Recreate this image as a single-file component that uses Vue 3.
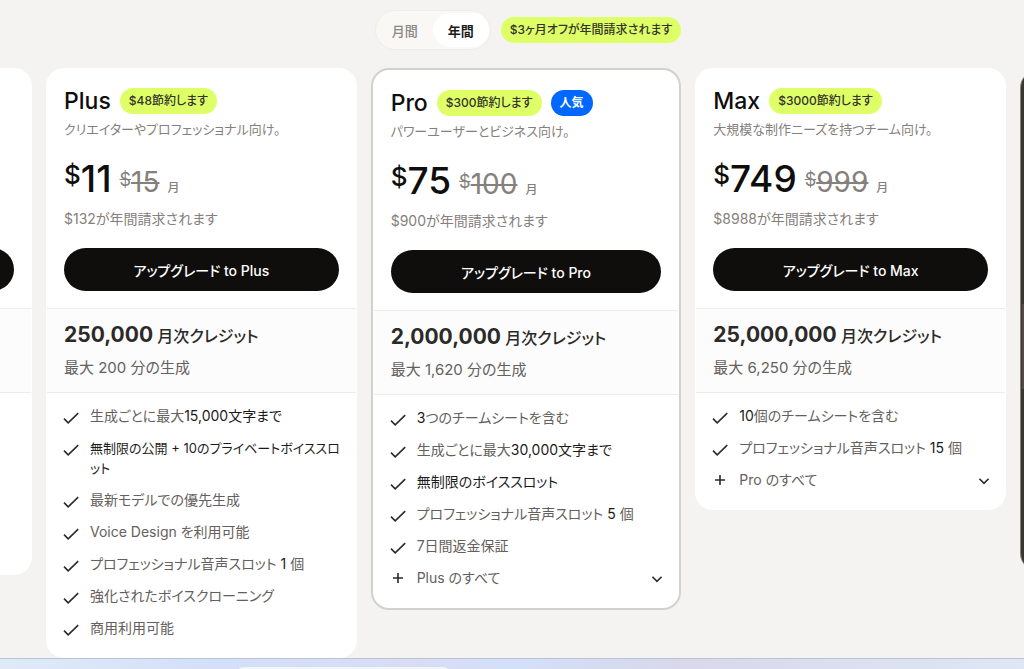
<script setup>
import { ref } from 'vue'

const period = ref('year')

const plans = [
  {
    name: 'Plus',
    save: '$48節約します',
    desc: 'クリエイターやプロフェッショナル向け。',
    price: '11',
    old: '15',
    billed: '$132が年間請求されます',
    credits: '250,000',
    minutes: '最大 200 分の生成',
    features: [
      [{ t: '生成ごとに最大' }, { t: '15,000文字まで', s: true }],
      [{ t: '無制限の公開 + 10のプライベートボイススロット', s: true, compact: true }],
      [{ t: '最新モデルでの優先生成' }],
      [{ t: 'Voice Design を利用可能' }],
      [{ t: 'プロフェッショナル音声スロット ' }, { t: '1', s: true }, { t: ' 個' }],
      [{ t: '強化されたボイスクローニング' }],
      [{ t: '商用利用可能' }],
    ],
  },
  {
    name: 'Pro',
    save: '$300節約します',
    popular: '人気',
    desc: 'パワーユーザーとビジネス向け。',
    price: '75',
    old: '100',
    billed: '$900が年間請求されます',
    credits: '2,000,000',
    minutes: '最大 1,620 分の生成',
    features: [
      [{ t: '3', s: true }, { t: 'つのチームシートを含む' }],
      [{ t: '生成ごとに最大' }, { t: '30,000文字まで', s: true }],
      [{ t: '無制限のボイススロット', s: true }],
      [{ t: 'プロフェッショナル音声スロット ' }, { t: '5', s: true }, { t: ' 個' }],
      [{ t: '7日間返金保証' }],
    ],
    includes: 'Plus のすべて',
  },
  {
    name: 'Max',
    save: '$3000節約します',
    desc: '大規模な制作ニーズを持つチーム向け。',
    price: '749',
    old: '999',
    billed: '$8988が年間請求されます',
    credits: '25,000,000',
    minutes: '最大 6,250 分の生成',
    features: [
      [{ t: '10', s: true }, { t: '個のチームシートを含む' }],
      [{ t: 'プロフェッショナル音声スロット ' }, { t: '15', s: true }, { t: ' 個' }],
    ],
    includes: 'Pro のすべて',
  },
]
</script>

<template>
  <div class="page">
    <div class="topbar">
      <div class="toggle">
        <button type="button" :class="{ active: period === 'month' }" :aria-pressed="period === 'month'" @click="period = 'month'">月間</button>
        <button type="button" :class="{ active: period === 'year' }" :aria-pressed="period === 'year'" @click="period = 'year'">年間</button>
      </div>
      <span class="pill">$3ヶ月オフが年間請求されます</span>
    </div>

    <main class="plans">
      <section class="card side">
        <div class="head"><button type="button" class="cta"></button></div>
        <div class="credits"></div>
        <div class="rest"></div>
      </section>

      <section v-for="p in plans" :key="p.name" class="card" :class="{ featured: p.popular }">
        <div class="head">
          <div class="title">
            <h2>{{ p.name }}</h2>
            <span class="pill">{{ p.save }}</span>
            <span v-if="p.popular" class="pill popular">{{ p.popular }}</span>
          </div>
          <p class="desc">{{ p.desc }}</p>
          <div class="price">
            <span class="now"><span class="cur">$</span>{{ p.price }}</span>
            <s class="was"><span class="cur">$</span>{{ p.old }}</s>
            <span class="per">月</span>
          </div>
          <p class="billed">{{ p.billed }}</p>
          <button type="button" class="cta">アップグレード to {{ p.name }}</button>
        </div>
        <div class="credits">
          <p class="amount"><b>{{ p.credits }}</b> 月次クレジット</p>
          <p class="minutes">{{ p.minutes }}</p>
        </div>
        <ul class="features">
          <li v-for="(f, i) in p.features" :key="i">
            <svg class="icon" viewBox="0 0 16 16" aria-hidden="true"><path d="M1 8.6 L5.2 12.8 L15.2 3.2" /></svg>
            <span class="label"><span v-for="(seg, j) in f" :key="j" :class="{ strong: seg.s, compact: seg.compact }">{{ seg.t }}</span></span>
          </li>
          <li v-if="p.includes">
            <button type="button" class="more">
              <svg class="icon plus" viewBox="0 0 16 16" aria-hidden="true"><path d="M8 3 V13 M3 8 H13" /></svg>
              <span class="label">{{ p.includes }}</span>
              <svg class="chevron" viewBox="0 0 12 12" aria-hidden="true"><path d="M1.4 3.8 L6 8.4 L10.6 3.8" /></svg>
            </button>
          </li>
        </ul>
      </section>

      <section class="card side dark">
        <div class="head"></div>
        <div class="credits"></div>
        <div class="rest"></div>
      </section>
    </main>

    <footer class="dock"><div class="tab"></div></footer>
  </div>
</template>

<style>
body {
  margin: 0;
  background: #f4f3f1;
}
</style>

<style scoped>
.page {
  --col: calc((100vw - 92px) / 3);
  box-sizing: border-box;
  min-height: 100vh;
  display: flex;
  flex-direction: column;
  overflow: hidden;
  background: #f4f3f1;
  color: #0f0e0d;
  font-family: Inter, "Noto Sans CJK JP", sans-serif;
  font-feature-settings: "palt";
  font-size: 14px;
}
h2, p, ul {
  margin: 0;
  padding: 0;
}
button {
  font: inherit;
  font-feature-settings: inherit;
  color: inherit;
  border: 0;
  padding: 0;
  background: none;
  cursor: pointer;
}
.topbar {
  display: flex;
  justify-content: center;
  align-items: center;
  gap: 10px;
  padding: 10px 0 18px;
  margin-left: 32px;
}
.toggle {
  box-sizing: border-box;
  display: flex;
  height: 40px;
  padding: 2px 1px;
  border: 1px solid #eeedea;
  border-radius: 20px;
  background: #f9f8f5;
}
.toggle button {
  width: 56px;
  border-radius: 17px;
  font-size: 13px;
  font-weight: 500;
  color: #8b8783;
}
.toggle .active {
  background: #fff;
  color: #1d1b1a;
  font-weight: 600;
}
.pill {
  height: 26px;
  line-height: 26px;
  padding: 0 9px;
  border-radius: 13px;
  background: #deff66;
  color: #35332c;
  font-size: 12px;
  font-weight: 500;
  white-space: nowrap;
}
.popular {
  background: #0067ff;
  color: #fff;
  font-weight: 600;
}
.plans {
  display: grid;
  grid-auto-flow: column;
  grid-auto-columns: var(--col);
  gap: 14px;
  align-items: start;
  margin-left: calc(32px - var(--col));
}
.card {
  box-sizing: border-box;
  min-width: 0;
  padding: 0 1px;
  border-radius: 18px;
  background: #fff;
}
.featured {
  border: 2px solid #d3d1cf;
}
.head {
  box-sizing: border-box;
  min-height: 240px;
  padding: 20px 17px 17px;
  display: flex;
  flex-direction: column;
}
.title {
  display: flex;
  align-items: center;
  gap: 9px;
}
h2 {
  font-size: 23px;
  line-height: 26px;
  font-weight: 500;
}
.desc {
  margin-top: 4px;
  font-size: 13px;
  line-height: 22px;
  color: #85807c;
  white-space: nowrap;
}
.price {
  display: flex;
  align-items: baseline;
  gap: 8px;
  height: 44px;
  margin-top: 17px;
  line-height: 44px;
}
.now {
  font-size: 37px;
  font-weight: 500;
}
.now .cur {
  font-size: 26px;
  vertical-align: 8px;
  line-height: 1;
}
.was {
  font-size: 28px;
  color: #85807c;
}
.was .cur {
  display: inline-block;
  font-size: 18px;
  vertical-align: 6px;
  line-height: 1;
  text-decoration: line-through;
}
.per {
  font-size: 12px;
  font-weight: 500;
  color: #85807c;
}
.billed {
  margin-top: 7px;
  line-height: 22px;
  color: #85807c;
}
.cta {
  width: 100%;
  height: 43px;
  margin-top: auto;
  border-radius: 22px;
  background: #0f0e0d;
  color: #fff;
  font-weight: 500;
}
.credits {
  box-sizing: border-box;
  min-height: 85px;
  padding: 13px 17px;
  border-top: 1px solid #ececeb;
  border-bottom: 1px solid #ececeb;
  background: #fcfcfc;
}
.amount {
  font-size: 16px;
  line-height: 26px;
  font-weight: 500;
  color: #2c2a28;
}
.amount b {
  font-size: 21px;
  font-weight: 700;
}
.minutes {
  margin-top: 8px;
  font-size: 15px;
  line-height: 22px;
  color: #65605c;
}
.features {
  list-style: none;
  display: flex;
  flex-direction: column;
  gap: 12px;
  padding: 13px 12px 20px 16px;
}
.features li,
.more {
  display: flex;
  gap: 11px;
  line-height: 20px;
  color: #65605c;
}
.more {
  flex: 1;
  padding-right: 3px;
  text-align: left;
}
.label {
  flex: 1;
}
.strong {
  color: #1d1b1a;
}
.compact {
  font-size: 13px;
}
.icon {
  flex: none;
  width: 16px;
  height: 16px;
  margin-top: 4px;
}
.plus {
  margin-top: 2px;
}
.icon path,
.chevron path {
  fill: none;
  stroke: #2c2a28;
  stroke-width: 1.6;
}
.chevron {
  flex: none;
  width: 12px;
  height: 12px;
  margin-top: 5px;
}
.rest {
  height: 182px;
}
.dark {
  margin-top: 2px;
  background: #393632;
  border-left: 1px solid #85827f;
}
.dark .head {
  min-height: 234px;
}
.dark .credits {
  background: #544b48;
  border-color: #544b48;
}
.dark .rest {
  height: 182px;
}
.dock {
  box-sizing: border-box;
  height: 11px;
  margin-top: auto;
  padding-top: 8px;
  border-top: 1px solid #b9c2d6;
  background: linear-gradient(90deg, #dfeaf7, #d3dff9 22%, #d9dcf3 40%, #d3dff9 50%, #d8d8ea 66%, #dfe6f4);
  overflow: hidden;
}
.tab {
  width: 21%;
  height: 12px;
  margin-left: 23%;
  border-radius: 8px 8px 0 0;
  background: #f1f5fd;
}
</style>
